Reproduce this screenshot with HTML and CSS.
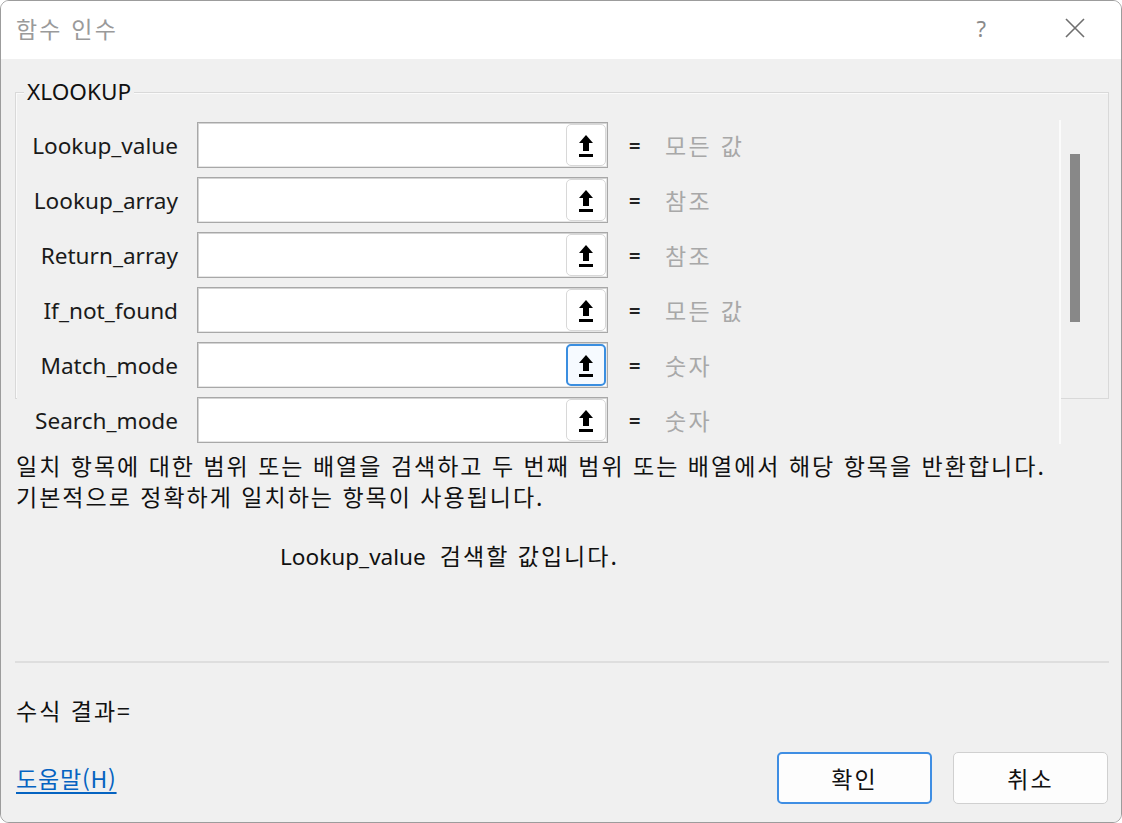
FILE: index.html
```html
<!DOCTYPE html>
<html lang="ko">
<head>
<meta charset="utf-8">
<title>함수 인수</title>
<link rel="stylesheet" href="styles.css">
</head>
<body>
<div class="window">
  <div class="titlebar">
    <span class="title ko">함수 인수</span>
    <span class="help">?</span>
    <span class="close">
      <svg width="22" height="22" viewBox="0 0 22 22"><path d="M2 2 L20 20 M20 2 L2 20" stroke="#6f6f6f" stroke-width="1.6" fill="none"/></svg>
    </span>
  </div>
  <div class="content">
    <div class="upper">
      <div class="group"><span class="legend">XLOOKUP</span></div>
      <div class="scrollview">
        <div class="rows">
          <div class="row">
            <span class="label">Lookup_value</span>
            <div class="input"><span class="refbtn"><svg class="arrow" viewBox="0 0 16 22"><path d="M8 0 L15 8 L11 8 L11 16 L5 16 L5 8 L1 8 Z M1 19 H15 V22 H1 Z"/></svg></span></div>
            <span class="eq">=</span>
            <span class="val ko">모든 값</span>
          </div>
          <div class="row">
            <span class="label">Lookup_array</span>
            <div class="input"><span class="refbtn"><svg class="arrow" viewBox="0 0 16 22"><path d="M8 0 L15 8 L11 8 L11 16 L5 16 L5 8 L1 8 Z M1 19 H15 V22 H1 Z"/></svg></span></div>
            <span class="eq">=</span>
            <span class="val ko">참조</span>
          </div>
          <div class="row">
            <span class="label">Return_array</span>
            <div class="input"><span class="refbtn"><svg class="arrow" viewBox="0 0 16 22"><path d="M8 0 L15 8 L11 8 L11 16 L5 16 L5 8 L1 8 Z M1 19 H15 V22 H1 Z"/></svg></span></div>
            <span class="eq">=</span>
            <span class="val ko">참조</span>
          </div>
          <div class="row">
            <span class="label">If_not_found</span>
            <div class="input"><span class="refbtn"><svg class="arrow" viewBox="0 0 16 22"><path d="M8 0 L15 8 L11 8 L11 16 L5 16 L5 8 L1 8 Z M1 19 H15 V22 H1 Z"/></svg></span></div>
            <span class="eq">=</span>
            <span class="val ko">모든 값</span>
          </div>
          <div class="row">
            <span class="label">Match_mode</span>
            <div class="input"><span class="refbtn focused"><svg class="arrow" viewBox="0 0 16 22"><path d="M8 0 L15 8 L11 8 L11 16 L5 16 L5 8 L1 8 Z M1 19 H15 V22 H1 Z"/></svg></span></div>
            <span class="eq">=</span>
            <span class="val ko">숫자</span>
          </div>
          <div class="row">
            <span class="label">Search_mode</span>
            <div class="input"><span class="refbtn"><svg class="arrow" viewBox="0 0 16 22"><path d="M8 0 L15 8 L11 8 L11 16 L5 16 L5 8 L1 8 Z M1 19 H15 V22 H1 Z"/></svg></span></div>
            <span class="eq">=</span>
            <span class="val ko">숫자</span>
          </div>
        </div>
        <div class="scrollbar"><div class="thumb"></div></div>
      </div>
    </div>
    <p class="desc ko">일치 항목에 대한 범위 또는 배열을 검색하고 두 번째 범위 또는 배열에서 해당 항목을 반환합니다.<br>기본적으로 정확하게 일치하는 항목이 사용됩니다.</p>
    <p class="arg"><span class="argname">Lookup_value</span><span class="argdesc ko">검색할 값입니다.</span></p>
    <div class="sep"></div>
    <p class="result ko">수식 결과=</p>
    <div class="bottom">
      <a class="helplink ko" href="#">도움말(H)</a>
      <div class="buttons">
        <button class="btn default ko">확인</button>
        <button class="btn ko">취소</button>
      </div>
    </div>
  </div>
</div>
</body>
</html>
```
FILE: styles.css
```css
* { box-sizing: border-box; }
html, body { margin: 0; padding: 0; background: #ffffff; }
body {
  font-family: "Noto Sans", "Noto Sans CJK KR", sans-serif;
  font-size: 22.6px;
  color: #1a1a1a;
}
.ko {
  font-family: "Noto Sans CJK KR", "Noto Sans", sans-serif;
  font-size: 23px;
  letter-spacing: 2px;
}
.window {
  width: 1122px;
  height: 823px;
  border: 1px solid #9c9c9c;
  border-radius: 9px;
  overflow: hidden;
  display: flex;
  flex-direction: column;
  background: #f0f0f0;
}
.titlebar {
  height: 58px;
  background: #ffffff;
  display: flex;
  align-items: center;
  padding-left: 15px;
  padding-bottom: 4px;
  flex: none;
}
.title {
  color: #9a9a9a;
  flex: 1;
  letter-spacing: 2.2px;
}
.help {
  font-size: 22px;
  color: #8a8a8a;
  margin-right: 78px;
}
.close {
  display: flex;
  margin-right: 35px;
}
.content {
  flex: 1;
  background: #f0f0f0;
  display: flex;
  flex-direction: column;
}
.upper {
  display: grid;
}
.group {
  grid-area: 1 / 1;
  margin-top: 33px;
  margin-left: 14px;
  width: 1094px;
  height: 307px;
  border: 1px solid #d9d9d9;
  box-shadow: inset 1px 1px 0 #fafafa;
  position: relative;
}
.legend {
  position: absolute;
  left: 8px;
  top: -16px;
  padding: 0 3px;
  background: #f0f0f0;
  line-height: 30px;
  color: #111;
}
.scrollview {
  grid-area: 1 / 1;
  margin-top: 61px;
  margin-left: 16px;
  height: 324px;
  display: flex;
  z-index: 1;
}
.rows {
  width: 1044px;
  height: 324px;
  overflow: hidden;
  padding-top: 2px;
  display: flex;
  flex-direction: column;
  gap: 9px;
  background: #f0f0f0;
  border-right: 2px solid #fbfbfb;
}
.row {
  display: flex;
  align-items: center;
  height: 46px;
  flex: none;
}
.label {
  width: 162px;
  text-align: right;
  padding-right: 1px;
  color: #1a1a1a;
}
.input {
  margin-left: 18px;
  width: 411px;
  height: 46px;
  background: #ffffff;
  border: 1px solid #a8a8a8;
  box-shadow: inset 1px 1px 0 #d4d4d4, inset -1px -1px 0 #e6e6e6;
  display: flex;
  justify-content: flex-end;
  align-items: center;
  padding-right: 1px;
}
.refbtn {
  width: 40px;
  height: 42px;
  border: 1px solid #d8d8d8;
  border-radius: 5px;
  background: #ffffff;
  display: flex;
  align-items: center;
  justify-content: center;
  padding-top: 2px;
}
.refbtn.focused {
  border: 2px solid #3a8ee0;
  background: #f6faff;
}
.arrow {
  width: 16px;
  height: 22px;
  fill: #000;
}
.eq {
  margin-left: 21px;
  width: 12px;
  font-weight: 700;
  font-size: 20px;
  color: #222;
}
.val {
  margin-left: 24px;
  color: #a8a8a8;
  letter-spacing: 2.3px;
}
.scrollbar {
  width: 28px;
  height: 324px;
  padding-top: 34px;
  padding-left: 9px;
}
.thumb {
  width: 10px;
  height: 168px;
  background: #888888;
}
.desc {
  margin: 6px 0 0 15px;
  line-height: 31px;
  color: #111;
}
.arg {
  margin: 28px 0 0 279px;
  line-height: 31px;
  display: flex;
  align-items: baseline;
  gap: 14px;
  color: #111;
}
.sep {
  margin: 89px 0 0 14px;
  width: 1094px;
  height: 2px;
  background: #dedede;
}
.result {
  margin: 32px 0 0 15px;
  line-height: 31px;
  color: #111;
}
.bottom {
  margin-top: 26px;
  display: flex;
  align-items: center;
  padding-left: 15px;
  padding-right: 13px;
}
.helplink {
  flex: 1;
  color: #0563c1;
  text-decoration: underline;
  text-underline-offset: 4px;
  letter-spacing: 0.8px;
}
.buttons {
  display: flex;
  gap: 21px;
}
.btn {
  width: 155px;
  height: 52px;
  border: 1px solid #d0d0d0;
  border-radius: 5px;
  background: #fdfdfd;
  color: #111;
  padding: 0;
}
.btn.default {
  border: 2px solid #3f8ee3;
}
```
